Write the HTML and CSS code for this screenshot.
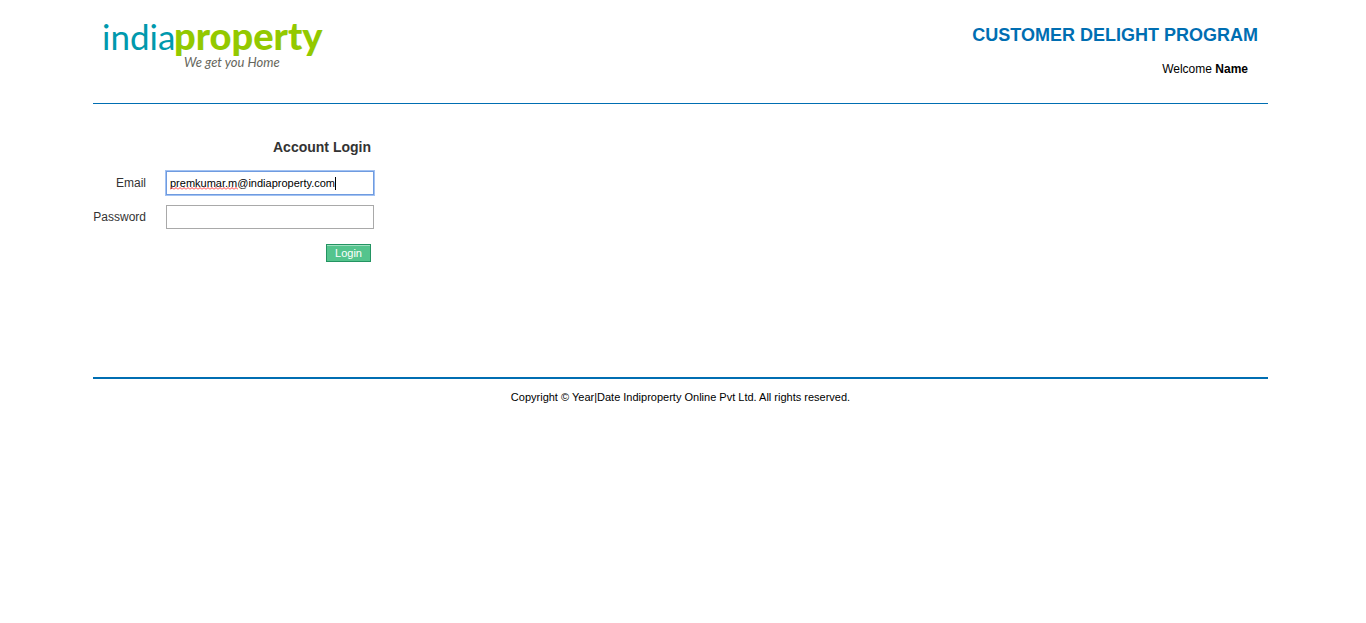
FILE: index.html
```html
<!DOCTYPE html>
<html lang="en">
<head>
<meta charset="utf-8">
<title>Customer Delight Program</title>
<link rel="stylesheet" href="styles.css">
</head>
<body>
<div class="page">
  <header class="header">
    <svg class="logo" width="240" height="64" viewBox="0 0 240 64" role="img" aria-label="indiaproperty">
      <text class="logo-india" x="9" y="36">india</text>
      <text class="logo-property" x="81" y="36">property</text>
      <text class="logo-tagline" x="91" y="53">We get you Home</text>
    </svg>
    <div class="heading">
      <h1 class="title">CUSTOMER DELIGHT PROGRAM</h1>
      <p class="welcome">Welcome <b>Name</b></p>
    </div>
  </header>
  <main class="main">
    <form class="login">
      <h2 class="login-title">Account Login</h2>
      <label class="label" for="email">Email</label>
      <div class="field">
        <input class="input input-active" id="email" type="text" value="premkumar.m@indiaproperty.com" spellcheck="false">
        <svg class="squiggle" width="68" height="3" viewBox="0 0 68 3" aria-hidden="true">
          <defs><pattern id="wave" width="4" height="3" patternUnits="userSpaceOnUse"><path d="M0 2.5 L2 .5 L4 2.5"/></pattern></defs>
          <rect class="squiggle-line" width="68" height="3" fill="url(#wave)"/>
        </svg>
        <span class="caret"></span>
      </div>
      <label class="label" for="password">Password</label>
      <div class="field"><input class="input" id="password" type="password"></div>
      <button class="button" type="button">Login</button>
    </form>
  </main>
  <footer class="footer">Copyright © Year|Date Indiproperty Online Pvt Ltd. All rights reserved.</footer>
</div>
</body>
</html>
```
FILE: styles.css
```css
* { box-sizing: border-box; }
body {
  margin: 0;
  padding-right: 5px;
  background: #fff;
  color: #000;
  font: 12px/16px "Liberation Sans", Arial, sans-serif;
}
.page { max-width: 1175px; margin: 0 auto; }
.header {
  display: flex;
  justify-content: space-between;
  padding: 14px 10px 25px 0;
  border-bottom: 1px solid #006eb2;
}
.logo { display: block; overflow: visible; }
.logo-india, .logo-property { font-family: Lato, sans-serif; }
.logo-india { fill: #0099ad; font-size: 35px; font-weight: 400; }
.logo-property { fill: #93c900; font-size: 38px; font-weight: 900; }
.logo-tagline { fill: #66665c; font: italic 400 13px Lato, sans-serif; }
.heading { padding-top: 10px; text-align: right; }
.title { margin: 0; color: #006eb2; font-size: 18px; line-height: 22px; }
.welcome { margin: 15px 10px 0 0; }
.main { padding: 33px 0 115px; }
.login {
  display: grid;
  grid-template-columns: 53px 209px;
  column-gap: 20px;
  row-gap: 10px;
  align-items: center;
  width: max-content;
  color: #333;
}
.login-title {
  grid-column: 1 / -1;
  margin: 0 4px 0 0;
  padding-bottom: 4px;
  font-size: 14px;
  line-height: 20px;
  text-align: right;
}
.label { text-align: right; }
.field { position: relative; }
.input {
  display: block;
  width: 208px;
  height: 24px;
  padding: 0 3px;
  border: 1px solid #a9a9a9;
  background: #fff;
  color: #000;
  font: 11px "Liberation Sans", Arial, sans-serif;
  outline: none;
}
.input-active { border-color: #6f9be0; box-shadow: 0 0 0 1px #a3c2f2; }
.squiggle { position: absolute; left: 4px; top: 16px; fill: none; stroke: #f33; }
.squiggle-line { stroke: none; }
.caret { position: absolute; left: 169px; top: 6px; width: 1px; height: 13px; background: #000; }
.button {
  grid-column: 2;
  justify-self: end;
  margin: 5px 4px 0 0;
  width: 45px;
  height: 18px;
  padding: 0;
  border: 1px solid #239462;
  box-shadow: inset 0 1px #a0dfc1;
  background: #54c48d;
  color: #fff;
  font: 11px "Liberation Sans", Arial, sans-serif;
}
.footer { padding: 10px 0; border-top: 2px solid #006eb2; font-size: 11px; text-align: center; }
```
